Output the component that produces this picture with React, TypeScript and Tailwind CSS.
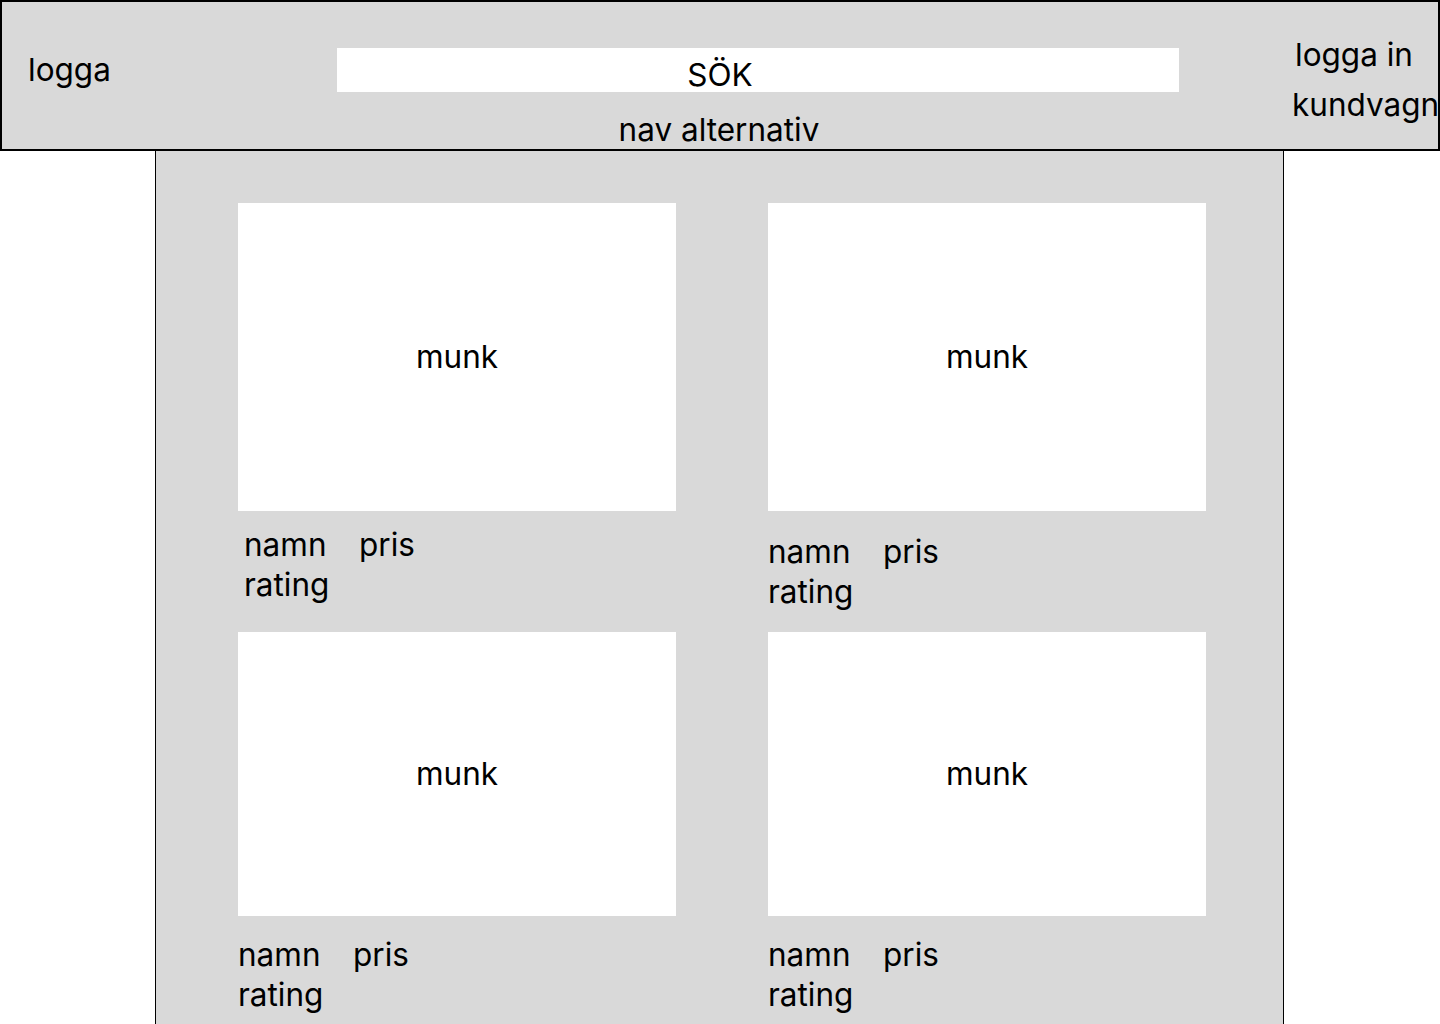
import React from 'react';

interface Product {
  imageHeight: string;
  textTop: string;
  textLeft: string;
}

const products: Product[] = [
  { imageHeight: 'h-[308px]', textTop: 'mt-[14px]', textLeft: 'pl-[6px]' },
  { imageHeight: 'h-[308px]', textTop: 'mt-[21px]', textLeft: 'pl-0' },
  { imageHeight: 'h-[284px]', textTop: 'mt-[19px]', textLeft: 'pl-0' },
  { imageHeight: 'h-[284px]', textTop: 'mt-[19px]', textLeft: 'pl-0' },
];

const ProductCard: React.FC<{ product: Product }> = ({ product }) => (
  <div className="flex flex-col">
    <div className={`${product.imageHeight} bg-white flex items-center justify-center`}>
      <span className="leading-[36px]">munk</span>
    </div>
    <div className={`${product.textTop} ${product.textLeft} leading-[40px]`}>
      <div className="flex">
        <span className="w-[115px]">namn</span>
        <span>pris</span>
      </div>
      <div>rating</div>
    </div>
  </div>
);

export default function App() {
  return (
    <div
      className="min-h-[1024px] bg-white text-black text-[31.5px] overflow-hidden"
      style={{ fontFamily: 'Inter, "Noto Sans", sans-serif' }}
    >
      <header className="h-[151px] border-2 border-black bg-[#d9d9d9] flex items-start overflow-hidden">
        <div className="w-[335px] shrink-0 pl-[26px] pt-[50px] leading-[36px]">logga</div>

        <div className="w-[842px] shrink-0 pt-[46px] flex flex-col">
          <div className="w-full h-[44px] bg-white pt-[9px] pr-[76px] text-center leading-[36px]">SÖK</div>
          <div className="mt-[20px] pr-[78px] text-center leading-[36px]">nav alternativ</div>
        </div>

        <div className="ml-[113px] shrink-0 pt-[35px] leading-[36px] whitespace-nowrap">
          <div className="pl-[3px]">logga in</div>
          <div className="mt-[14px]">kundvagn</div>
        </div>
      </header>

      <main className="ml-[155px] w-[1129px] h-[873px] border-x border-black bg-[#d9d9d9] pl-[82px] pt-[52px]">
        <div className="grid grid-cols-[438px_438px] gap-x-[92px] gap-y-[20px] items-start">
          {products.map((p, i) => (
            <ProductCard key={i} product={p} />
          ))}
        </div>
      </main>
    </div>
  );
}
